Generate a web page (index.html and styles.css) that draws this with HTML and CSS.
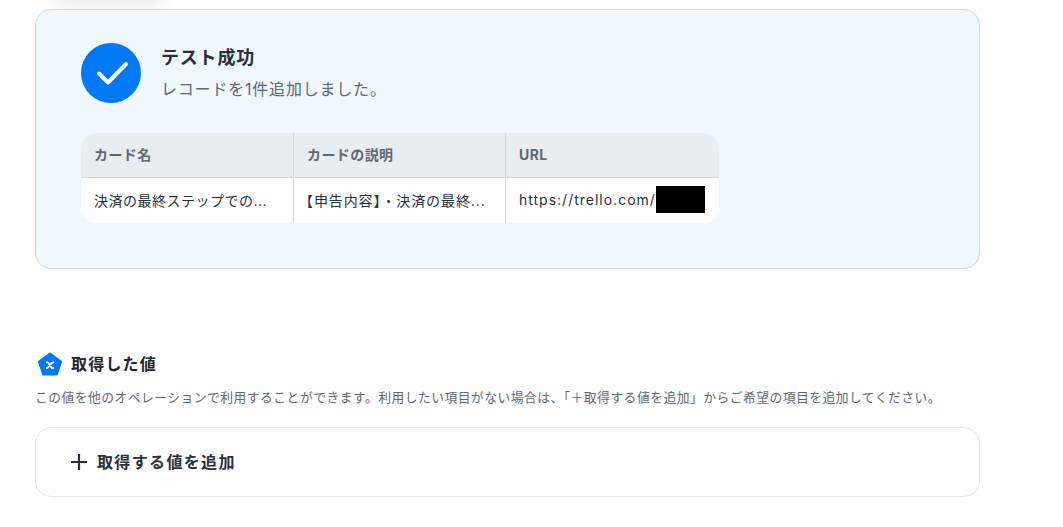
FILE: index.html
```html
<!DOCTYPE html>
<html lang="ja">
<head>
  <meta charset="UTF-8" />
  <meta name="viewport" content="width=device-width, initial-scale=1.0"/>
  <title>テスト成功</title>
  <link rel="stylesheet" href="styles.css">
</head>
<body>
  <div class="top-shadow"></div>
  <main class="page">
    <section class="result-card">
      <div class="result-head">
        <span class="check">
          <svg width="60" height="60" viewBox="0 0 60 60" fill="none">
            <path d="M18 30.5L27 39.5L45 21" stroke="#fff" stroke-width="4" stroke-linecap="round" stroke-linejoin="round"/>
          </svg>
        </span>
        <div class="result-text">
          <h2>テスト成功</h2>
          <p>レコードを1件追加しました。</p>
        </div>
      </div>

      <div class="table">
        <div class="cell head">カード名</div>
        <div class="cell head">カードの説明</div>
        <div class="cell head">URL</div>
        <div class="cell name">決済の最終ステップでの...</div>
        <div class="cell desc">【申告内容】・決済の最終...</div>
        <div class="cell url">https://trello.com/<span class="redact"></span></div>
      </div>
    </section>

    <section class="values">
      <div class="values-title">
        <svg width="24" height="24" viewBox="0 0 24 24">
          <path d="M12 1.8L22.8 9.6L18.7 22.3H5.3L1.2 9.6Z" fill="#0079f2" stroke="#0079f2" stroke-width="2.4" stroke-linejoin="round"/>
          <path d="M8 10.2H8.8C9.7 10.2 10.4 10.7 10.8 11.4L13 15C13.5 15.8 14.2 16.2 15 16.2H16M15.8 10.2C14.7 10.2 14 10.7 13.4 11.4L10.4 15C9.8 15.8 9.2 16.2 8 16.2" fill="none" stroke="#fff" stroke-width="1.9"/>
        </svg>
        <h3>取得した値</h3>
      </div>
      <p class="values-desc">この値を他のオペレーションで利用することができます。利用したい項目がない場合は、「＋取得する値を追加」からご希望の項目を追加してください。</p>
      <div class="add-card">
        <svg width="16" height="16" viewBox="0 0 16 16" fill="none">
          <path d="M8 0V16M0 8H16" stroke="#283039" stroke-width="2.2"/>
        </svg>
        <span>取得する値を追加</span>
      </div>
    </section>
  </main>
</body>
</html>
```

FILE: styles.css
```css
* {
  margin: 0;
  padding: 0;
  box-sizing: border-box;
}

html, body {
  height: 527px;
  overflow: hidden;
}

body {
  font-family: 'Inter', 'Noto Sans CJK JP', sans-serif;
  background: #fff;
  color: #283039;
  position: relative;
  letter-spacing: 0.05em;
}

.top-shadow {
  position: absolute;
  left: 56px;
  top: -30px;
  width: 106px;
  height: 30px;
  box-shadow: 0 3px 14px rgba(0, 0, 0, 0.1);
}

.page {
  width: 945px;
  margin-left: 35px;
  padding-top: 9px;
}

.result-card {
  height: 260px;
  padding: 33px 45px 0;
  background: #eff7ff;
  border: 1px solid #d0d7de;
  border-radius: 16px;
}

.result-head {
  display: flex;
  gap: 20px;
}

.check {
  width: 60px;
  height: 60px;
  border-radius: 50%;
  background: #0079f2;
  display: block;
}

.result-text h2 {
  font-size: 18px;
  font-weight: 700;
  line-height: 30px;
}

.result-text p {
  font-size: 16px;
  line-height: 30px;
  margin-top: 1px;
  color: #5e6873;
}

.table {
  display: grid;
  grid-template-columns: 212px 212px 214px;
  width: 638px;
  margin-top: 29px;
  border-radius: 16px;
  overflow: hidden;
  background: #fff;
}

.cell {
  height: 45px;
  padding: 0 12px 2px 13px;
  display: flex;
  align-items: center;
  font-size: 14px;
  color: #283039;
  border-left: 1px solid #d0d7de;
  white-space: nowrap;
  text-spacing-trim: trim-start;
}

.cell:nth-child(3n+1) {
  border-left: none;
}

.cell.head {
  background: #e9ecf0;
  color: #5e6873;
  font-weight: 700;
  border-bottom: 1px solid #d0d7de;
  letter-spacing: 0.03em;
}

.name {
  letter-spacing: 0.5px;
}

.cell.desc {
  padding-left: 12px;
  letter-spacing: 0.9px;
}

.url {
  letter-spacing: 1px;
}

.redact {
  width: 49px;
  height: 27px;
  background: #000;
}

.values {
  margin-top: 81px;
}

.values-title {
  display: flex;
  align-items: center;
  gap: 9px;
  margin-left: 3px;
}

.values-title h3 {
  font-size: 16px;
  font-weight: 700;
  line-height: 28px;
  letter-spacing: 1.2px;
  color: #1f262d;
}

.values-desc {
  margin-top: 10px;
  font-size: 12.8px;
  line-height: 20px;
  letter-spacing: 0.46px;
  color: #5e6873;
  white-space: nowrap;
}

.add-card {
  height: 70px;
  margin-top: 19px;
  padding-left: 35px;
  display: flex;
  align-items: center;
  gap: 10px;
  background: #fff;
  border: 1px solid #e4e7eb;
  border-radius: 16px;
  font-size: 16px;
  font-weight: 700;
  letter-spacing: 1.35px;
}

.add-card span {
  margin-bottom: 2px;
}
```
